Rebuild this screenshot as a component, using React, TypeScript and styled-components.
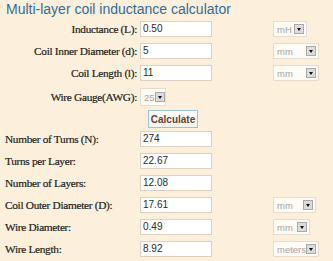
import React from "react";
import styled, { createGlobalStyle } from "styled-components";

const Global = createGlobalStyle`
  html, body { margin: 0; padding: 0; background: #fcf0dc; }
  body { width: 333px; height: 261px; overflow: hidden; }
`;

const Page = styled.div`
  width: 333px;
  height: 261px;
  background: #fcf0dc;
  box-sizing: border-box;
`;

const Title = styled.div`
  height: 18px;
  box-sizing: border-box;
  padding: 2px 0 0 6px;
  font-family: "Liberation Sans", Arial, sans-serif;
  font-size: 14px;
  line-height: 15px;
  color: #336c98;
  white-space: nowrap;
`;

const Row = styled.div<{ $h?: number }>`
  display: grid;
  grid-template-columns: 140px 72px 61px auto;
  align-items: center;
  height: ${(p) => p.$h ?? 22}px;
`;

const Label = styled.div<{ $left?: boolean }>`
  font-family: "Liberation Serif", "Times New Roman", serif;
  font-size: 11.3px;
  letter-spacing: -0.3px;
  -webkit-text-stroke: 0.2px #221d19;
  color: #221d19;
  text-align: ${(p) => (p.$left ? "left" : "right")};
  padding: ${(p) => (p.$left ? "0 0 0 5px" : "0 3px 0 0")};
  white-space: nowrap;
`;

const Field = styled.div`
  width: 72px;
  height: 16px;
  box-sizing: border-box;
  border: 1px solid #ddd2c2;
  background: #ffffff;
  font-family: "Liberation Sans", Arial, sans-serif;
  font-size: 10px;
  line-height: 14px;
  color: #2a2a2a;
  padding-left: 2px;
`;

const Select = styled.div<{ $w: number; $h?: number }>`
  width: ${(p) => p.$w}px;
  height: ${(p) => p.$h ?? 16}px;
  box-sizing: border-box;
  border: 1px solid #e4dccf;
  background: #fffbf5;
  display: flex;
  align-items: center;
  justify-content: space-between;
  padding: 0 2px 0 3px;
  font-family: "Liberation Sans", Arial, sans-serif;
  font-size: 9.5px;
  color: #a8a4a0;
  white-space: nowrap;
`;

const Arrow = styled.span`
  flex: none;
  width: 10px;
  height: 10px;
  box-sizing: border-box;
  border: 1px solid #a9a9a9;
  background: #dcdcdc;
  display: flex;
  align-items: center;
  justify-content: center;
  &::after {
    content: "";
    border-left: 2.5px solid transparent;
    border-right: 2.5px solid transparent;
    border-top: 3px solid #111;
  }
`;

const ButtonRow = styled.div`
  display: flex;
  height: 18px;
  padding-left: 148px;
`;

const Button = styled.div`
  width: 50px;
  height: 18px;
  box-sizing: border-box;
  border: 1px solid #9cc4d8;
  background: linear-gradient(#ffffff, #f2f2ee);
  font-family: "Liberation Sans", Arial, sans-serif;
  font-size: 10px;
  font-weight: bold;
  color: #6b3f2e;
  display: flex;
  align-items: center;
  justify-content: center;
`;

type Unit = { text: string; w: number };

const top: { label: string; value: string; unit: Unit }[] = [
  { label: "Inductance (L):", value: "0.50", unit: { text: "mH", w: 34 } },
  { label: "Coil Inner Diameter (d):", value: "5", unit: { text: "mm", w: 46 } },
  { label: "Coil Length (l):", value: "11", unit: { text: "mm", w: 46 } },
];

const results: { label: string; value: string; unit?: Unit }[] = [
  { label: "Number of Turns (N):", value: "274" },
  { label: "Turns per Layer:", value: "22.67" },
  { label: "Number of Layers:", value: "12.08" },
  { label: "Coil Outer Diameter (D):", value: "17.61", unit: { text: "mm", w: 43 } },
  { label: "Wire Diameter:", value: "0.49", unit: { text: "mm", w: 37 } },
  { label: "Wire Length:", value: "8.92", unit: { text: "meters", w: 46 } },
];

export default function App() {
  return (
    <Page>
      <Global />
      <Title>Multi-layer coil inductance calculator</Title>
      {top.map((r) => (
        <Row key={r.label}>
          <Label>{r.label}</Label>
          <Field>{r.value}</Field>
          <span />
          <Select $w={r.unit.w}>
            {r.unit.text}
            <Arrow />
          </Select>
        </Row>
      ))}
      <Row $h={26}>
        <Label>Wire Gauge(AWG):</Label>
        <Select $w={26} $h={18}>
          25
          <Arrow />
        </Select>
      </Row>
      <ButtonRow>
        <Button>Calculate</Button>
      </ButtonRow>
      {results.map((r) => (
        <Row key={r.label}>
          <Label $left>{r.label}</Label>
          <Field>{r.value}</Field>
          <span />
          {r.unit ? (
            <Select $w={r.unit.w}>
              {r.unit.text}
              <Arrow />
            </Select>
          ) : (
            <span />
          )}
        </Row>
      ))}
    </Page>
  );
}
